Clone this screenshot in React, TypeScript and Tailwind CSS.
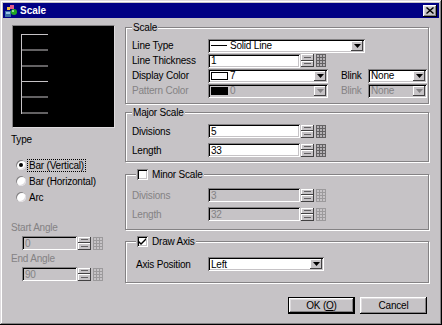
import React from "react";

// classic 3D bevels
const raised =
  "bg-[#c6c3c6] shadow-[inset_-1px_-1px_#000,inset_1px_1px_#fff,inset_-2px_-2px_#848284,inset_2px_2px_#dedbde]";
const raisedThin = "bg-[#c6c3c6] shadow-[inset_-1px_-1px_#424142,inset_1px_1px_#fff]";
const sunken =
  "shadow-[inset_1px_1px_#848284,inset_-1px_-1px_#fff,inset_2px_2px_#000,inset_-2px_-2px_#c6c3c6]";
const etched = "border border-[#848284] shadow-[inset_1px_1px_#fff,1px_1px_#fff]";

function Arrow({ disabled }: { disabled?: boolean }) {
  return (
    <div className={`w-[12px] h-[10px] mr-[2px] shrink-0 flex items-center justify-center ${raisedThin}`}>
      <svg width="7" height="4" viewBox="0 0 7 4">
        <polygon points="0,0 7,0 3.5,4" fill={disabled ? "#848284" : "#000"} />
      </svg>
    </div>
  );
}

function Combo({
  className,
  disabled,
  children,
}: {
  className: string;
  disabled?: boolean;
  children: React.ReactNode;
}) {
  return (
    <div
      className={`h-[14px] flex items-center ${className} ${
        disabled ? "bg-[#c6c3c6] text-[#848284]" : "bg-white"
      } ${sunken}`}
    >
      <div className="flex-1 flex items-center pl-[3px] overflow-hidden whitespace-nowrap">{children}</div>
      <Arrow disabled={disabled} />
    </div>
  );
}

function Keypad({ dim }: { dim?: boolean }) {
  const cells = [];
  for (let r = 0; r < 4; r++)
    for (let c = 0; c < 3; c++)
      cells.push(
        <rect key={`${r}-${c}`} x={1 + c * 3} y={1 + r * 3} width="2" height="2" fill={dim ? "#c6c3c6" : "#b5b2b5"} />
      );
  return (
    <svg width="10" height="13" viewBox="0 0 10 13" className="shrink-0">
      <rect width="10" height="13" fill={dim ? "#9c9a9c" : "#636163"} />
      {cells}
    </svg>
  );
}

function Spin({ dim }: { dim?: boolean }) {
  return (
    <div className="flex items-center ml-[1px] gap-[2px]">
      <div className="flex flex-col w-[13px] h-[13px]">
        {[0, 1].map((i) => (
          <div key={i} className={`flex-1 flex items-center justify-center ${raisedThin}`}>
            <div className="w-[7px] h-px bg-[#636163]" />
          </div>
        ))}
      </div>
      <Keypad dim={dim} />
    </div>
  );
}

function Field({ className, value, disabled }: { className: string; value: string; disabled?: boolean }) {
  return (
    <div className="flex items-center">
      <div
        className={`h-[14px] flex items-center pl-[3px] ${className} ${
          disabled ? "bg-[#c6c3c6] text-[#848284]" : "bg-white"
        } ${sunken}`}
      >
        {value}
      </div>
      <Spin dim={disabled} />
    </div>
  );
}

function Radio({ checked, label, focus }: { checked?: boolean; label: string; focus?: boolean }) {
  return (
    <div className="h-[16px] flex items-center pl-[5px] gap-[2px]">
      <span className="w-[10px] h-[10px] rounded-full bg-white shadow-[inset_1px_1px_#848284,inset_-1px_-1px_#dedbde] flex items-center justify-center">
        {checked && <span className="w-[4px] h-[4px] rounded-full bg-black" />}
      </span>
      <span className={`px-[1px] leading-[11px] ${focus ? "outline-1 outline-dotted outline-black" : ""}`}>{label}</span>
    </div>
  );
}

function Check({ checked }: { checked?: boolean }) {
  return (
    <span className={`w-[11px] h-[11px] bg-white flex items-center justify-center ${sunken}`}>
      {checked && (
        <svg width="7" height="7" viewBox="0 0 7 7">
          <path d="M0 3l2 2 5-5v2l-5 5-2-2z" fill="#000" />
        </svg>
      )}
    </span>
  );
}

function GroupLabel({ children, indent = "ml-[6px]" }: { children: React.ReactNode; indent?: string }) {
  return (
    <div className={`-mt-[7px] h-[13px] w-fit px-[1px] bg-[#c6c3c6] flex items-center gap-[4px] ${indent}`}>
      {children}
    </div>
  );
}

function Row({ label, dim, children }: { label: string; dim?: boolean; children: React.ReactNode }) {
  return (
    <div className="h-[15px] flex items-center">
      <span className={`w-[76px] ${dim ? "text-[#848284]" : ""}`}>{label}</span>
      {children}
    </div>
  );
}

export default function App() {
  return (
    <div className="w-[442px] h-[325px] bg-[#c6c3c6] relative font-['Liberation_Sans',Arial,sans-serif] text-[10px] leading-[13px] text-black tracking-[-0.2px] shadow-[inset_-1px_-1px_#000,inset_1px_1px_#dedbde,inset_-2px_-2px_#848284,inset_2px_2px_#fff] overflow-hidden">
      {/* title bar */}
      <div className="mt-[3px] mx-[3px] h-[15px] bg-[#000084] flex items-center">
        <svg width="14" height="14" viewBox="0 0 14 14" className="ml-[1px]">
          <rect x="1" y="7" width="6" height="6" fill="#3a6ea5" />
          <rect x="2" y="8" width="4" height="2" fill="#9cc3e6" />
          <rect x="6" y="1" width="4" height="4" fill="#e05a8a" />
          <circle cx="10" cy="8" r="3" fill="#21a821" />
          <circle cx="9" cy="7" r="1" fill="#b6f0b6" />
          <rect x="3" y="3" width="3" height="3" fill="#f0c040" />
        </svg>
        <span className="ml-[2px] text-white font-bold tracking-normal">Scale</span>
        <div className={`ml-auto mr-[2px] w-[14px] h-[12px] flex items-center justify-center ${raised}`}>
          <svg width="8" height="7" viewBox="0 0 8 7">
            <path d="M0.5 0.5L7.5 6.5M7.5 0.5L0.5 6.5" stroke="#000" strokeWidth="1.4" />
          </svg>
        </div>
      </div>

      <div className="flex pl-[11px]">
        {/* left column */}
        <div className="w-[114px] pt-[7px] flex flex-col">
          <div className="ml-[1px] w-[103px] h-[103px] bg-black border border-[#848284] border-r-[#dedbde] border-b-[#dedbde]">
            <svg width="101" height="101" viewBox="0 0 101 101">
              <g stroke="#c6c3c6" strokeWidth="1">
                <line x1="8.5" y1="8" x2="8.5" y2="88" />
                {[8.5, 24, 40, 55.5, 71, 87].map((y) => (
                  <line key={y} x1="8" y1={y} x2="35" y2={y} />
                ))}
              </g>
            </svg>
          </div>
          <div className="mt-[5px]">Type</div>
          <div className="mt-[11px] flex flex-col">
            <Radio checked focus label="Bar (Vertical)" />
            <Radio label="Bar (Horizontal)" />
            <Radio label="Arc" />
          </div>
          <div className="mt-[16px] text-[#848284]">Start Angle</div>
          <div className="mt-[2px] ml-[11px]">
            <Field className="w-[55px]" value="0" disabled />
          </div>
          <div className="mt-[2px] text-[#848284]">End Angle</div>
          <div className="mt-[2px] ml-[11px]">
            <Field className="w-[55px]" value="90" disabled />
          </div>
        </div>

        {/* right column */}
        <div className="w-[304px] pt-[9px] flex flex-col">
          <div className={`flex flex-col pl-[6px] pb-[5px] ${etched}`}>
            <GroupLabel indent="ml-0">Scale</GroupLabel>
            <div className="mt-[4px] flex flex-col">
              <Row label="Line Type">
                <Combo className="w-[157px]">
                  <span className="w-[16px] h-px bg-black mr-[3px]" />
                  Solid Line
                </Combo>
              </Row>
              <Row label="Line Thickness">
                <Field className="w-[92px]" value="1" />
              </Row>
              <Row label="Display Color">
                <Combo className="w-[120px]">
                  <span className="w-[17px] h-[8px] border border-black bg-white mr-[2px]" />7
                </Combo>
                <span className="ml-[13px] w-[27px]">Blink</span>
                <Combo className="w-[59px]">None</Combo>
              </Row>
              <Row label="Pattern Color" dim>
                <Combo className="w-[120px]" disabled>
                  <span className="w-[17px] h-[8px] bg-black mr-[2px]" />0
                </Combo>
                <span className="ml-[13px] w-[27px] text-[#848284]">Blink</span>
                <Combo className="w-[59px]" disabled>
                  None
                </Combo>
              </Row>
            </div>
          </div>

          <div className={`mt-[8px] flex flex-col pl-[6px] pb-[4px] ${etched}`}>
            <GroupLabel indent="ml-0">Major Scale</GroupLabel>
            <div className="mt-[5px] flex flex-col gap-[5px]">
              <div className="h-[14px] flex items-center">
                <span className="w-[76px]">Divisions</span>
                <Field className="w-[92px]" value="5" />
              </div>
              <div className="h-[14px] flex items-center">
                <span className="w-[76px]">Length</span>
                <Field className="w-[92px]" value="33" />
              </div>
            </div>
          </div>

          <div className={`mt-[12px] flex flex-col pl-[6px] pb-[8px] ${etched}`}>
            <GroupLabel indent="ml-[4px]">
              <Check />
              Minor Scale
            </GroupLabel>
            <div className="mt-[7px] flex flex-col gap-[5px] text-[#848284]">
              <div className="h-[14px] flex items-center">
                <span className="w-[76px]">Divisions</span>
                <Field className="w-[92px]" value="3" disabled />
              </div>
              <div className="h-[14px] flex items-center">
                <span className="w-[76px]">Length</span>
                <Field className="w-[92px]" value="32" disabled />
              </div>
            </div>
          </div>

          <div className={`mt-[11px] flex flex-col pl-[6px] pb-[11px] ${etched}`}>
            <GroupLabel indent="ml-[4px]">
              <Check checked />
              Draw Axis
            </GroupLabel>
            <div className="mt-[9px] h-[14px] flex items-center">
              <span className="w-[76px] pl-[4px]">Axis Position</span>
              <Combo className="w-[116px]">Left</Combo>
            </div>
          </div>

          <div className="mt-[14px] flex justify-end gap-[5px] pr-[2px]">
            <div className="w-[67px] h-[17px] border border-black">
              <div className={`w-full h-full flex items-center justify-center ${raised}`}>
                OK (<span className="underline">O</span>)
              </div>
            </div>
            <div className={`w-[67px] h-[17px] flex items-center justify-center ${raised}`}>Cancel</div>
          </div>
        </div>
      </div>
    </div>
  );
}
